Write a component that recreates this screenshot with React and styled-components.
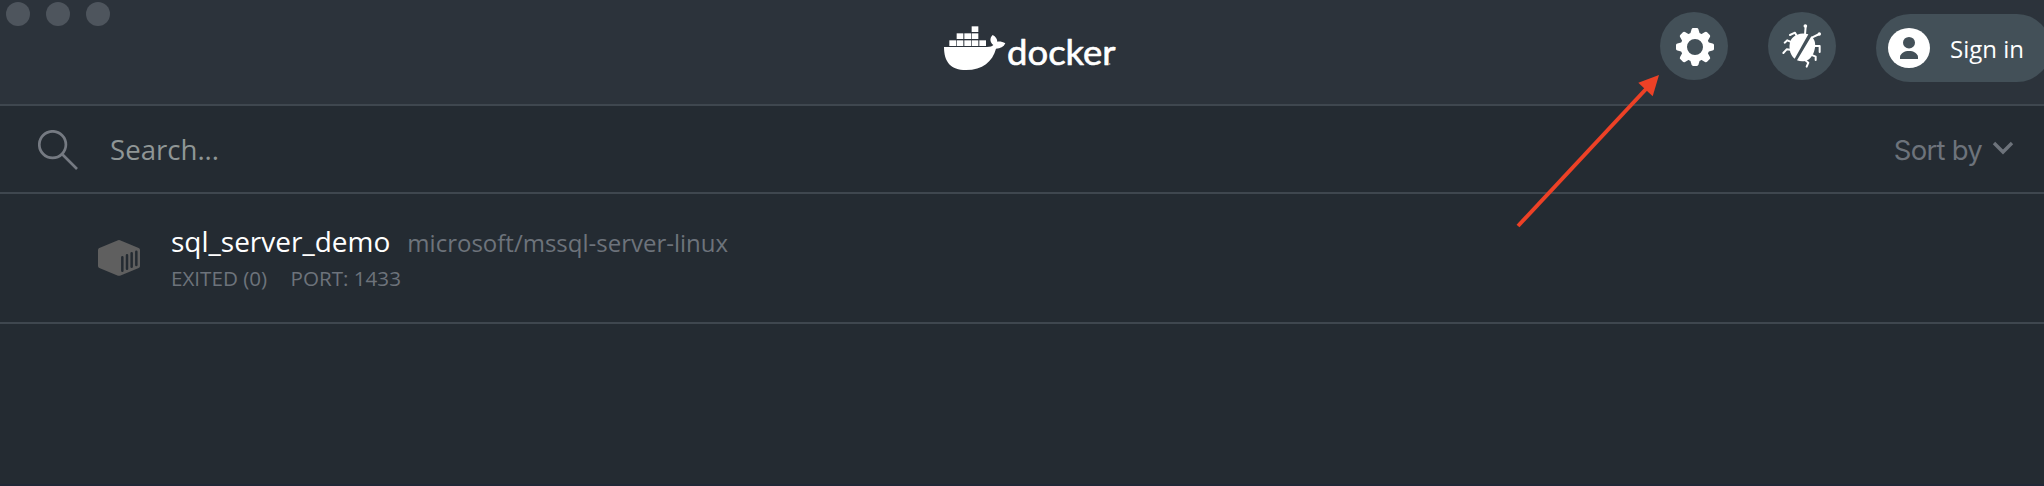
import React from "react";
import styled, { createGlobalStyle } from "styled-components";

const GlobalStyle = createGlobalStyle`
  * { box-sizing: border-box; }
  html, body { margin: 0; background: #242b32; }
  body { overflow: hidden; font-family: "Open Sans", "Noto Sans", sans-serif; }
`;

const Window = styled.div`
  position: relative;
  width: 2044px;
  height: 486px;
  overflow: hidden;
  display: flex;
  flex-direction: column;
  background: #242b32;
  border-bottom: 2px solid #202836;
`;

const TitleBar = styled.header`
  flex: none;
  height: 106px;
  display: flex;
  align-items: flex-start;
  background: #2c333b;
  border-bottom: 2px solid #3f474f;
`;

const WindowControls = styled.div`
  flex: none;
  width: 944px;
  display: flex;
  gap: 16px;
  padding: 2px 0 0 6px;
`;

const ControlDot = styled.span`
  width: 24px;
  height: 24px;
  border-radius: 50%;
  background: #4e555d;
`;

const Logo = styled.svg`
  flex: none;
  display: block;
  width: 176px;
  height: 50px;
  margin-top: 24px;
  overflow: visible;
`;

const Actions = styled.nav`
  flex: none;
  display: flex;
  align-items: flex-start;
  gap: 40px;
  margin-left: 540px;
  padding-top: 12px;
`;

const RoundButton = styled.button`
  flex: none;
  width: 68px;
  height: 68px;
  padding: 0;
  border: 0;
  border-radius: 50%;
  background: #435058;
  svg { display: block; }
`;

const SignInButton = styled.button`
  flex: none;
  display: flex;
  align-items: center;
  width: 175px;
  height: 68px;
  margin-top: 2px;
  padding: 2px 0 0 12px;
  border: 0;
  border-radius: 34px;
  background: #435058;
  color: #fff;
  font: 400 24px/34px "Open Sans", sans-serif;
  white-space: nowrap;
`;

const Avatar = styled.svg`
  flex: none;
  width: 42px;
  height: 40px;
  margin: -2px 20px 0 0;
`;

const SearchBar = styled.div`
  flex: none;
  height: 88px;
  display: flex;
  align-items: center;
  padding: 0 30px 0 38px;
  border-bottom: 2px solid #3f474f;
`;

const SearchIcon = styled.svg`
  width: 40px;
  height: 40px;
  margin: 2px 32px 0 0;
`;

const SearchLabel = styled.span`
  flex: 1;
  color: #8f9696;
  font-size: 27.6px;
  line-height: 38px;
`;

const SortBy = styled.div`
  display: flex;
  align-items: center;
  gap: 10px;
  padding-top: 2px;
  color: #6d737b;
  font: 400 27.5px/38px Inter, sans-serif;
  letter-spacing: -0.75px;
  svg { margin-top: -4px; }
`;

const Container = styled.article`
  flex: none;
  height: 130px;
  display: flex;
  align-items: flex-start;
  padding: 28px 0 0 98px;
  border-bottom: 2px solid #3f474f;
`;

const ContainerIcon = styled.svg`
  width: 42px;
  height: 36px;
  margin: 18px 31px 0 0;
`;

const TitleLine = styled.div`
  display: flex;
  align-items: baseline;
  gap: 17px;
  height: 42px;
  line-height: 38px;
  white-space: nowrap;
`;

const Name = styled.span`
  color: #fff;
  font-size: 28px;
`;

const Image = styled.span`
  color: #6d737b;
  font-size: 24px;
`;

const Status = styled.div`
  display: flex;
  gap: 23.5px;
  color: #6d737b;
  font-size: 20.6px;
  line-height: 28px;
  white-space: nowrap;
`;

const Pointer = styled.svg`
  position: absolute;
  left: 1500px;
  top: 60px;
  width: 180px;
  height: 180px;
  pointer-events: none;
`;

const crates = [
  [125, 34], [80, 55], [103, 55], [125, 55],
  [58, 76], [80, 76], [103, 76], [125, 76], [148, 76],
];

function DockerLogo() {
  return (
    <Logo viewBox="42 27 528 150" fill="#fff" aria-label="docker">
      {crates.map(([x, y]) => (
        <rect key={`${x}-${y}`} x={x} y={y} width="20" height="17" />
      ))}
      <path d="M42 96H171C181 96 187 94 190 90C180 82 178 70 188 60C197 65 202 72 202 80C209 79 218 80 226 85C221 96 211 101 198 101C188 139 158 165 108 165C62 165 42 141 42 96Z" />
      <text x="231" y="149" fontFamily="Lato" fontWeight="400" fontSize="103" textLength="326" lengthAdjust="spacingAndGlyphs" stroke="#fff" strokeWidth="1.8" strokeLinejoin="round">docker</text>
      <circle cx="539" cy="147" r="2.5" fill="#b5b9bd" />
    </Logo>
  );
}

function GearIcon() {
  const teeth = [0, 45, 90, 135, 180, 225, 270, 315];
  return (
    <svg width="68" height="68" viewBox="0 0 68 68">
      <g transform="translate(35 35)">
        <circle r="11.2" fill="none" stroke="#fff" strokeWidth="6.4" />
        {teeth.map((angle) => (
          <path key={angle} transform={`rotate(${angle})`} fill="#fff"
            d="M-4.8 -13L-3.5 -17.6Q-3.1 -19 -1.9 -19H1.9Q3.1 -19 3.5 -17.6L4.8 -13Z" />
        ))}
      </g>
    </svg>
  );
}

function BugIcon() {
  return (
    <svg width="68" height="68" viewBox="54 36 204 204" fill="#fff">
      <path d="M175 103C158 97 139 101 127 114C117 126 117 143 121 157C124 166 128 172 134 176Z" />
      <path d="M184 109C195 118 198 134 194 148C190 166 181 179 166 183C157 185 148 184 141 181Z" />
      <g fill="none" stroke="#fff" strokeWidth="6" strokeLinecap="round" strokeLinejoin="round">
        <path d="M165 104L167 79M187 112L208 102M140 107L135 98L120 105M126 127L112 121L104 128M121 149L110 148L100 159M193 138H209V156M188 166L197 170V180M166 181L175 188L170 200" />
      </g>
      <circle cx="166" cy="78" r="5.5" />
      <circle cx="208" cy="102" r="5" />
    </svg>
  );
}

export default function App() {
  return (
    <>
      <GlobalStyle />
      <Window>
        <TitleBar>
          <WindowControls>
            <ControlDot />
            <ControlDot />
            <ControlDot />
          </WindowControls>
          <DockerLogo />
          <Actions>
            <RoundButton aria-label="Settings"><GearIcon /></RoundButton>
            <RoundButton aria-label="Troubleshoot"><BugIcon /></RoundButton>
            <SignInButton>
              <Avatar viewBox="0 0 42 40">
                <ellipse cx="21" cy="20" rx="21" ry="20" fill="#fff" />
                <ellipse cx="21" cy="14.7" rx="6" ry="5.8" fill="#435058" />
                <path d="M12 31V28.5C13 25 16.5 23 21 23S29 25 30 28.5V31Z" fill="#435058" />
              </Avatar>
              Sign in
            </SignInButton>
          </Actions>
        </TitleBar>
        <SearchBar>
          <SearchIcon viewBox="0 0 40 40" fill="none" stroke="#757a82" strokeWidth="2.7">
            <circle cx="14.6" cy="14.6" r="13.3" />
            <path d="M24.5 24.5L39 39" />
          </SearchIcon>
          <SearchLabel>Search...</SearchLabel>
          <SortBy>
            Sort by
            <svg width="22" height="14" viewBox="0 0 22 14" fill="none" stroke="#6d737b" strokeWidth="3.4">
              <path d="M2 2L11 11L20 2" />
            </svg>
          </SortBy>
        </SearchBar>
        <Container>
          <ContainerIcon viewBox="0 0 126 108">
            <path d="M60 1Q63 -1 66 1L122 24Q126 26 126 30V78Q126 82 122 84L66 107Q63 108 60 107L4 84Q0 82 0 78V30Q0 26 4 24Z" fill="#5f5f5f" />
            <path d="M73 52V92M87 46V86M101 40V80M115 35V75" stroke="#242b32" strokeWidth="7.5" strokeLinecap="round" />
          </ContainerIcon>
          <div>
            <TitleLine>
              <Name>sql_server_demo</Name>
              <Image>microsoft/mssql-server-linux</Image>
            </TitleLine>
            <Status>
              <span>EXITED (0)</span>
              <span>PORT: 1433</span>
            </Status>
          </div>
        </Container>
        <Pointer viewBox="0 0 180 180">
          <path d="M18 166L147 28" stroke="#ed4126" strokeWidth="4" />
          <path d="M159 15L138.3 22.7L152.7 36.3Z" fill="#ed4126" />
        </Pointer>
      </Window>
    </>
  );
}
